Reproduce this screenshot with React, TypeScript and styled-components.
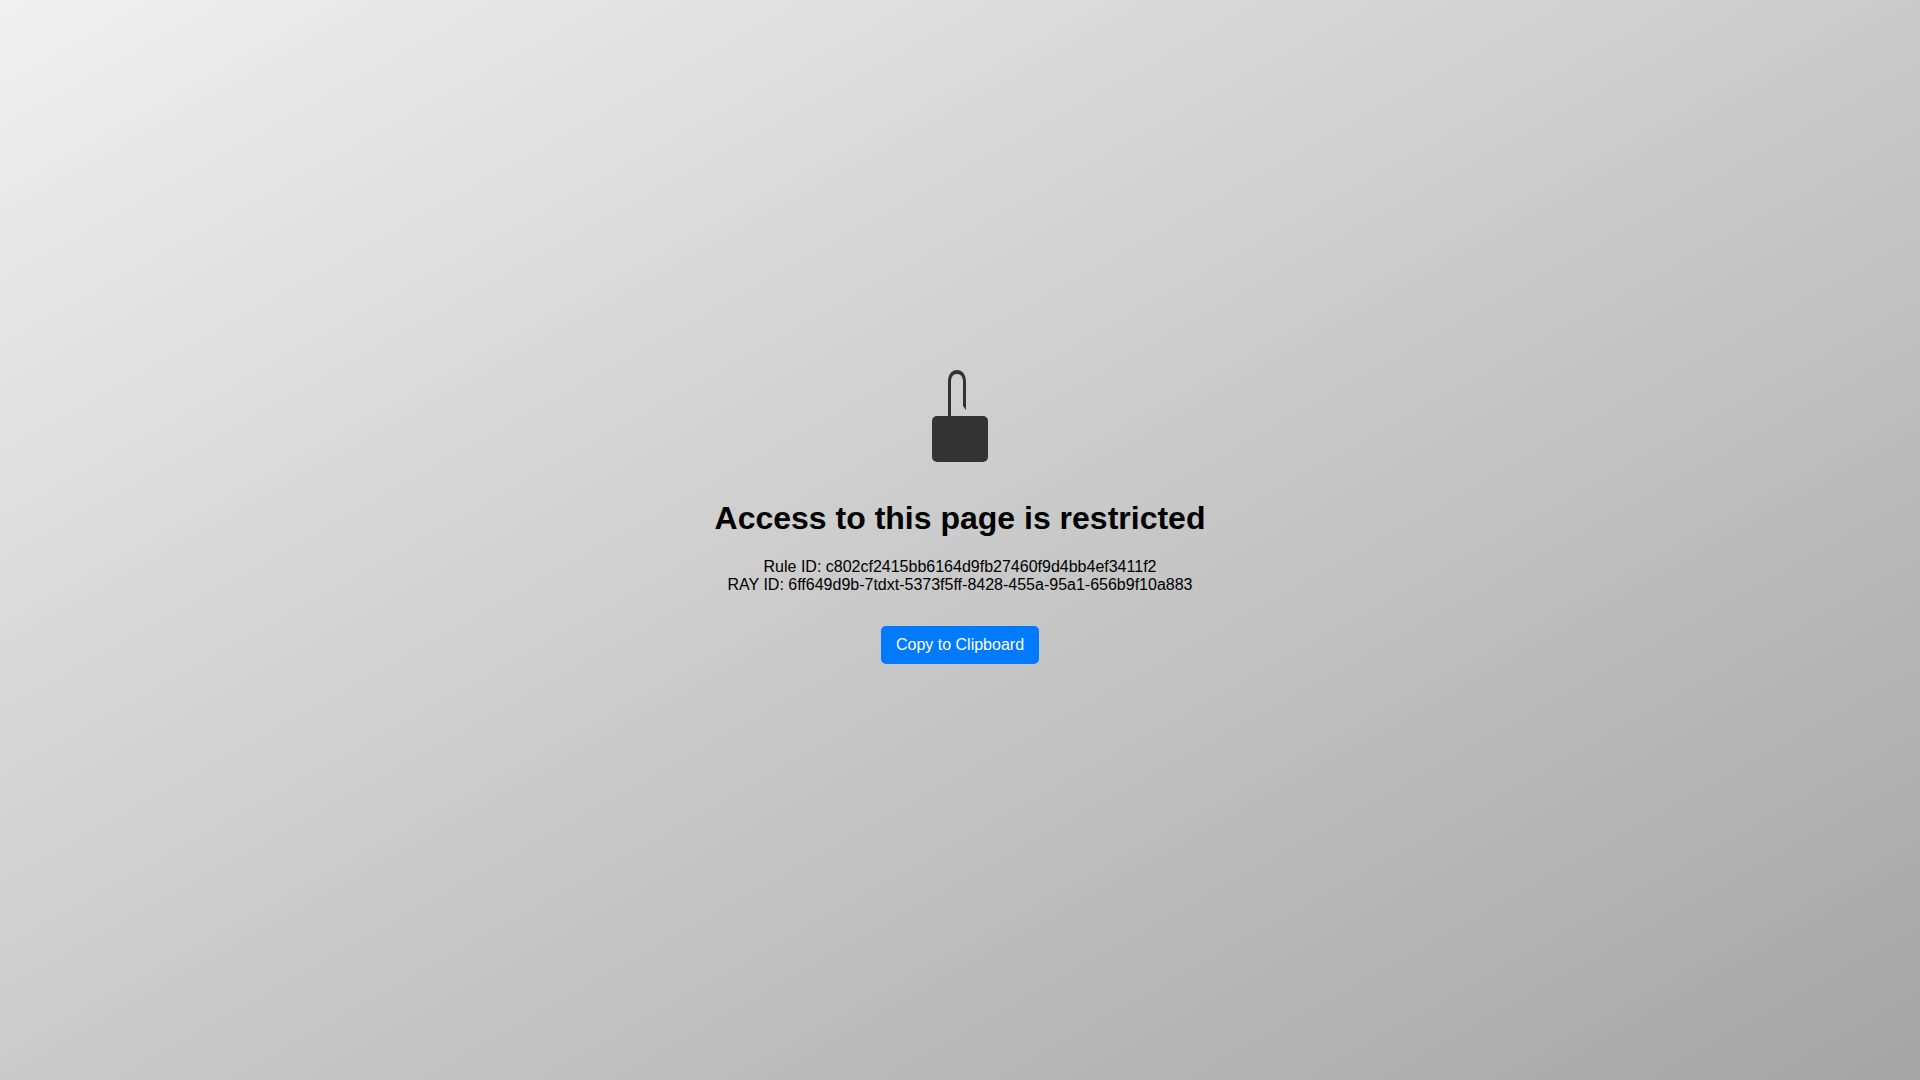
import React from "react";
import styled, { createGlobalStyle } from "styled-components";

const GlobalStyle = createGlobalStyle`
  body {
    margin: 0;
    font-family: Arial, "Liberation Sans", sans-serif;
    color: #000;
  }
`;

const Page = styled.main`
  display: flex;
  flex-direction: column;
  align-items: center;
  justify-content: center;
  box-sizing: border-box;
  min-height: 100vh;
  padding: 16px 16px 62px;
  text-align: center;
  background: linear-gradient(to bottom right, #f0f0f0, #a5a5a5);
`;

const LockIcon = styled.svg`
  display: block;
  width: 56px;
  height: 92px;
  fill: #333;
`;

const Title = styled.h1`
  margin: 38px 0 21px;
  font-size: 32px;
  line-height: 37px;
`;

const Details = styled.p`
  margin: 0;
  font-size: 16px;
  line-height: 18px;
`;

const CopyButton = styled.button`
  margin-top: 32px;
  padding: 10px 15px;
  border: 0;
  border-radius: 5px;
  background: #007bff;
  color: #fff;
  font: inherit;
  font-size: 16px;
  line-height: 18px;
  cursor: pointer;
`;

const RULE_ID = "c802cf2415bb6164d9fb27460f9d4bb4ef3411f2";
const RAY_ID = "6ff649d9b-7tdxt-5373f5ff-8428-455a-95a1-656b9f10a883";

export default function App() {
  const details = `Rule ID: ${RULE_ID}\nRAY ID: ${RAY_ID}`;
  return (
    <>
      <GlobalStyle />
      <Page>
        <LockIcon viewBox="0 0 56 92" aria-hidden="true">
          <path d="M16 46V12C16 4 20 0 25 0s9 4 9 12v28l-3-4V12c0-5-2-8-6-8s-6 3-6 8v34z" />
          <rect y="46" width="56" height="46" rx="5" />
        </LockIcon>
        <Title>Access to this page is restricted</Title>
        <Details>
          Rule ID: {RULE_ID}
          <br />
          RAY ID: {RAY_ID}
        </Details>
        <CopyButton type="button" onClick={() => navigator.clipboard?.writeText(details)}>
          Copy to Clipboard
        </CopyButton>
      </Page>
    </>
  );
}
